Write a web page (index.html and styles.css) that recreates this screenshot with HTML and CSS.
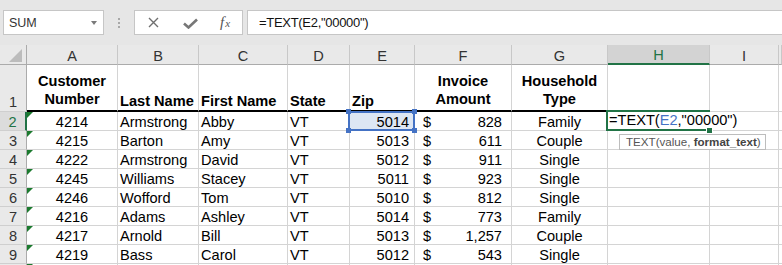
FILE: index.html
```html
<!DOCTYPE html>
<html lang="en">
<head>
  <meta charset="UTF-8">
  <title>Sheet - TEXT formula</title>
  <link rel="stylesheet" href="styles.css">
</head>
<body>
  <div class="toolbar">
    <div class="namebox">SUM<span class="caret"></span></div>
    <div class="grip"><i></i><i></i><i></i></div>
    <div class="fnbox">
      <svg class="ic-x" width="11" height="11" viewBox="0 0 11 11"><path d="M1 1 L10 10 M10 1 L1 10" stroke="#6f6f6f" stroke-width="1.4" fill="none"/></svg>
      <svg class="ic-ok" width="15" height="11" viewBox="0 0 15 11"><path d="M1 5.5 L5.5 9.5 L14 1.5" stroke="#777" stroke-width="2.6" fill="none"/></svg>
      <span class="fx">f<span>x</span></span>
    </div>
    <div class="formula">=TEXT(E2,"00000")</div>
  </div>

  <div class="sheet">
    <div class="row hdr">
      <div class="corner"><svg width="26" height="19" viewBox="0 0 26 19"><polygon points="22,4 22,17 9,17" fill="#bcbcbc"/></svg></div>
      <div class="ch">A</div><div class="ch">B</div><div class="ch">C</div><div class="ch">D</div>
      <div class="ch">E</div><div class="ch">F</div><div class="ch">G</div><div class="ch sel">H</div>
      <div class="ch">I</div><div class="ch"></div>
    </div>

    <div class="row r1">
      <div class="rh">1</div>
      <div class="c b ctr wrap">Customer<br>Number</div>
      <div class="c b">Last Name</div>
      <div class="c b">First Name</div>
      <div class="c b">State</div>
      <div class="c b">Zip</div>
      <div class="c b ctr wrap">Invoice<br>Amount</div>
      <div class="c b ctr wrap">Household<br>Type</div>
      <div class="c"></div><div class="c"></div><div class="c"></div>
    </div>

    <div class="row">
      <div class="rh sel">2</div>
      <div class="c ctr flag">4214</div><div class="c">Armstrong</div><div class="c">Abby</div><div class="c">VT</div>
      <div class="c num ref">5014<i class="hd tl"></i><i class="hd tr"></i><i class="hd bl"></i><i class="hd br"></i></div>
      <div class="c acc"><span>$</span><span>828</span></div><div class="c ctr">Family</div>
      <div class="c active">
        <span class="edit">=TEXT(<em>E2</em>,"00000")</span>
        <i class="fill"></i>
        <div class="tip">TEXT(value, <b>format_text</b>)</div>
      </div>
      <div class="c"></div><div class="c"></div>
    </div>

    <div class="row">
      <div class="rh">3</div>
      <div class="c ctr flag">4215</div><div class="c">Barton</div><div class="c">Amy</div><div class="c">VT</div>
      <div class="c num">5013</div><div class="c acc"><span>$</span><span>611</span></div><div class="c ctr">Couple</div>
      <div class="c"></div><div class="c"></div><div class="c"></div>
    </div>

    <div class="row">
      <div class="rh">4</div>
      <div class="c ctr flag">4222</div><div class="c">Armstrong</div><div class="c">David</div><div class="c">VT</div>
      <div class="c num">5012</div><div class="c acc"><span>$</span><span>911</span></div><div class="c ctr">Single</div>
      <div class="c"></div><div class="c"></div><div class="c"></div>
    </div>

    <div class="row">
      <div class="rh">5</div>
      <div class="c ctr flag">4245</div><div class="c">Williams</div><div class="c">Stacey</div><div class="c">VT</div>
      <div class="c num">5011</div><div class="c acc"><span>$</span><span>923</span></div><div class="c ctr">Single</div>
      <div class="c"></div><div class="c"></div><div class="c"></div>
    </div>

    <div class="row">
      <div class="rh">6</div>
      <div class="c ctr flag">4246</div><div class="c">Wofford</div><div class="c">Tom</div><div class="c">VT</div>
      <div class="c num">5010</div><div class="c acc"><span>$</span><span>812</span></div><div class="c ctr">Single</div>
      <div class="c"></div><div class="c"></div><div class="c"></div>
    </div>

    <div class="row">
      <div class="rh">7</div>
      <div class="c ctr flag">4216</div><div class="c">Adams</div><div class="c">Ashley</div><div class="c">VT</div>
      <div class="c num">5014</div><div class="c acc"><span>$</span><span>773</span></div><div class="c ctr">Family</div>
      <div class="c"></div><div class="c"></div><div class="c"></div>
    </div>

    <div class="row">
      <div class="rh">8</div>
      <div class="c ctr flag">4217</div><div class="c">Arnold</div><div class="c">Bill</div><div class="c">VT</div>
      <div class="c num">5013</div><div class="c acc"><span>$</span><span>1,257</span></div><div class="c ctr">Couple</div>
      <div class="c"></div><div class="c"></div><div class="c"></div>
    </div>

    <div class="row">
      <div class="rh">9</div>
      <div class="c ctr flag">4219</div><div class="c">Bass</div><div class="c">Carol</div><div class="c">VT</div>
      <div class="c num">5012</div><div class="c acc"><span>$</span><span>543</span></div><div class="c ctr">Single</div>
      <div class="c"></div><div class="c"></div><div class="c"></div>
    </div>

    <div class="row last">
      <div class="rh"></div>
      <div class="c flag"></div><div class="c"></div><div class="c"></div><div class="c"></div>
      <div class="c"></div><div class="c"></div><div class="c"></div>
      <div class="c"></div><div class="c"></div><div class="c"></div>
    </div>
  </div>
</body>
</html>
```

FILE: styles.css
```css
body {
  margin: 0;
  background: #fff;
  font-family: 'Liberation Sans', Arial, sans-serif;
  color: #000;
  overflow: hidden;
}

/* formula bar */
.toolbar {
  height: 45px;
  box-sizing: border-box;
  background: #e6e6e6;
  padding-top: 10px;
  display: flex;
  align-items: flex-start;
}
.namebox {
  margin-left: 3px;
  width: 101px;
  height: 25px;
  box-sizing: border-box;
  border: 1px solid #c6c6c6;
  background: #fff;
  display: flex;
  align-items: center;
  padding-left: 5px;
  font-size: 12.5px;
  color: #333;
}
.caret {
  margin-left: auto;
  margin-right: 6px;
  width: 0; height: 0;
  border-left: 3.5px solid transparent;
  border-right: 3.5px solid transparent;
  border-top: 4px solid #7a7a7a;
}
.grip {
  margin-left: 14px;
  width: 2px;
  padding-top: 8px;
  display: flex;
  flex-direction: column;
  gap: 2px;
}
.grip i { display: block; width: 2px; height: 2px; background: #a8a8a8; }
.fnbox {
  margin-left: 14px;
  width: 109px;
  height: 25px;
  box-sizing: border-box;
  border: 1px solid #c6c6c6;
  background: #fff;
  display: flex;
  align-items: center;
}
.ic-x { margin-left: 13px; }
.ic-ok { margin-left: 24px; margin-top: 2px; }
.fx {
  margin-left: 22px;
  font-family: 'Liberation Serif', serif;
  font-style: italic;
  font-size: 15px;
  color: #555;
}
.fx span { font-size: 11px; margin-left: 1px; }
.formula {
  margin-left: 4px;
  flex: 1;
  height: 25px;
  box-sizing: border-box;
  border: 1px solid #c6c6c6;
  border-right: none;
  background: #fff;
  padding-left: 11px;
  display: flex;
  align-items: center;
  font-size: 13px;
  letter-spacing: -0.3px;
  color: #111;
}

/* grid */
.row {
  display: grid;
  grid-template-columns: 27px 91px 81px 89px 62px 65px 97px 96px 102px 69px 1fr;
  height: 19px;
  font-size: 14.6px;
  line-height: 16px;
}
.row > div {
  box-sizing: border-box;
  border-right: 1px solid #d4d4d4;
  border-bottom: 1px solid #d4d4d4;
  display: flex;
  align-items: flex-end;
  white-space: nowrap;
  position: relative;
}
.row.hdr { height: 20px; }
.row.r1 { height: 47px; line-height: 18px; }
.row.last { height: 2px; }

.corner, .ch, .rh {
  background: #e9e9e9;
  color: #333;
  justify-content: center;
}
.row > .corner { border-right-color: #ababab; border-bottom-color: #ababab; padding: 0; align-items: flex-start; }
.row > .ch { border-right-color: #c8c8c8; border-bottom-color: #ababab; }
.row > .ch.sel {
  background: #d3d3d3;
  color: #217346;
  border-bottom: 2px solid #217346;
}
.row > .rh { border-right-color: #ababab; border-bottom-color: #cfcfcf; }
.row > .rh.sel {
  background: #dcdcdc;
  color: #217346;
  border-right: 2px solid #217346;
}

.c { padding: 0 2px; }
.b { font-weight: bold; }
.r1 .c.b { border-bottom: 2px solid #000; }
.wrap { white-space: normal; padding-bottom: 2px; text-align: center; }
.ctr { justify-content: center; }
.num { justify-content: flex-end; padding-right: 5px; }
.acc { justify-content: space-between; padding: 0 9px 0 8px; }

/* number-stored-as-text flag */
.flag::before {
  content: "";
  position: absolute;
  left: 0; top: 0;
  border-top: 6px solid #1b7a2e;
  border-right: 6px solid transparent;
}

/* referenced cell E2 */
.ref { background: #dde6f3; }
.ref::after {
  content: "";
  position: absolute;
  left: -2px; top: -1px; right: -1px; bottom: -1px;
  border: 2px solid #4472c4;
}
.hd {
  position: absolute;
  width: 5px; height: 5px;
  background: #4472c4;
  z-index: 2;
}
.hd.tl { left: -4px; top: -3px; }
.hd.tr { right: -3px; top: -3px; }
.hd.bl { left: -4px; bottom: -3px; }
.hd.br { right: -3px; bottom: -3px; }

/* active cell H2 */
.active::after {
  content: "";
  position: absolute;
  left: -2px; top: -2px; right: -1px; bottom: -1px;
  border: 2px solid #217346;
}
.edit {
  position: absolute;
  left: 1px; top: 0;
  height: 17px;
  background: #fff;
  padding-right: 2px;
  z-index: 3;
}
.edit em { font-style: normal; color: #4472c4; }
.fill {
  position: absolute;
  right: -4px; bottom: -4px;
  width: 5px; height: 5px;
  background: #217346;
  border: 1px solid #fff;
  z-index: 4;
}
.tip {
  position: absolute;
  left: 11px; top: 22px;
  height: 16px;
  box-sizing: border-box;
  padding: 0 4px 0 6px;
  border: 1px solid #bdbdbd;
  background: #fff;
  font-size: 11.6px;
  line-height: 14px;
  color: #555;
  z-index: 5;
}
.tip b { color: #444; }
```
